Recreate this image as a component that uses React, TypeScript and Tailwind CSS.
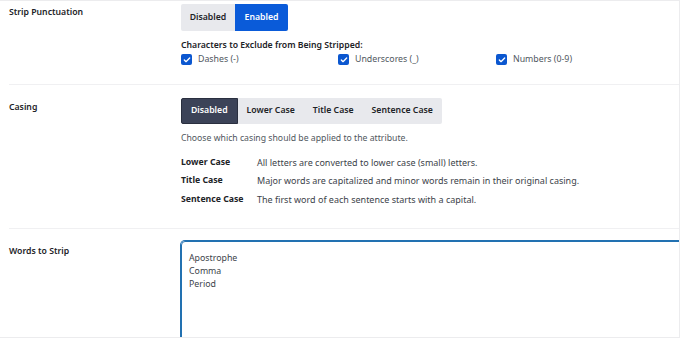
import { Check } from 'lucide-react';

const font = { fontFamily: '"Noto Sans", "Open Sans", sans-serif' };

function Box({ label }: { label: string }) {
  return (
    <label className="flex items-center gap-[6px] text-[8.8px] text-[#50575e]">
      <span className="w-[11px] h-[11px] rounded-[2px] bg-[#0b57d0] flex items-center justify-center">
        <Check size={8} strokeWidth={4} className="text-white" />
      </span>
      {label}
    </label>
  );
}

export default function App() {
  const casing = ['Disabled', 'Lower Case', 'Title Case', 'Sentence Case'];
  const defs = [
    ['Lower Case', 'All letters are converted to lower case (small) letters.'],
    ['Title Case', 'Major words are capitalized and minor words remain in their original casing.'],
    ['Sentence Case', 'The first word of each sentence starts with a capital.'],
  ];

  return (
    <div style={font} className="w-[680px] h-[338px] overflow-hidden bg-white border-t border-r border-b border-[#ececee] text-[#1d2327]">
      <div className="pl-[9px]">
        {/* Strip punctuation */}
        <div className="flex h-[84px] border-b border-[#f0f0f2]">
          <div className="w-[172px] shrink-0 pt-[5px] text-[8.7px] font-semibold">Strip Punctuation</div>
          <div className="pt-[3px]">
            <div className="flex w-fit h-[27px] text-[8.7px] font-semibold">
              <button className="w-[54px] bg-[#e8e9ed] text-[#1d2327] rounded-l-[2px]">Disabled</button>
              <button className="w-[53px] bg-[#0a5bd9] text-white rounded-r-[2px]">Enabled</button>
            </div>
            <div className="mt-[8px] text-[8.7px] font-semibold">Characters to Exclude from Being Stripped:</div>
            <div className="flex mt-[1px]">
              <div className="w-[157px]"><Box label="Dashes (-)" /></div>
              <div className="w-[158px]"><Box label="Underscores (_)" /></div>
              <Box label="Numbers (0-9)" />
            </div>
          </div>
        </div>

        {/* Casing */}
        <div className="flex h-[144px] border-b border-[#f0f0f2]">
          <div className="w-[172px] shrink-0 pt-[16px] text-[8.7px] font-semibold">Casing</div>
          <div className="pt-[13px]">
            <div className="flex w-fit h-[26px] text-[8.7px] font-semibold bg-[#e8e9ed] rounded-[2px]">
              {casing.map((c, i) => (
                <button
                  key={c}
                  className={
                    i === 0
                      ? 'px-[9px] bg-[#3c4358] text-white border border-[#2a2f3f] rounded-l-[2px]'
                      : 'px-[9px] text-[#1d2327]'
                  }
                >
                  {c}
                </button>
              ))}
            </div>
            <div className="mt-[8px] text-[8.7px] text-[#50575e]">Choose which casing should be applied to the attribute.</div>
            <div className="mt-[8px] flex flex-col">
              {defs.map(([k, v]) => (
                <div key={k} className="flex items-center h-[18.5px]">
                  <span className="w-[76px] text-[8.7px] font-bold">{k}</span>
                  <span className="text-[9px] text-[#3c434a]">{v}</span>
                </div>
              ))}
            </div>
          </div>
        </div>

        {/* Words to strip */}
        <div className="flex">
          <div className="w-[172px] shrink-0 pt-[16px] text-[8.7px] font-semibold">Words to Strip</div>
          <div className="pt-[12px] flex-1">
            <textarea
              readOnly
              defaultValue={'Apostrophe\nComma\nPeriod'}
              className="block w-[520px] h-[140px] resize-none rounded-tl-[4px] border-[1.5px] border-[#2271b1] shadow-[0_0_0_1px_#2271b1] outline-none px-[7px] py-[10px] text-[8.8px] leading-[13px] text-[#3c434a]"
            />
          </div>
        </div>
      </div>
    </div>
  );
}
